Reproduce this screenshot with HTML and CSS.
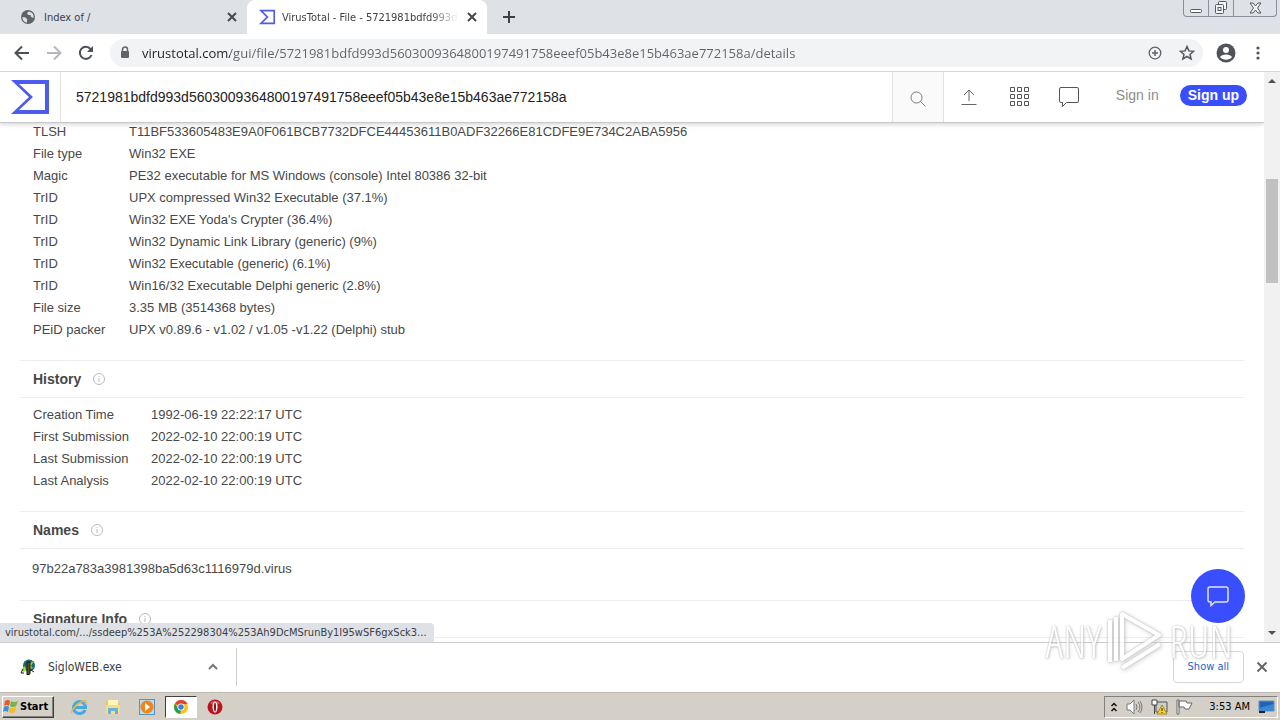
FILE: index.html
```html
<!DOCTYPE html>
<html lang="en">
<head>
<meta charset="utf-8">
<title>VirusTotal - File</title>
<link rel="stylesheet" href="styles.css">
</head>
<body>

<div class="tabstrip">
	<div class="tab">
		<svg class="favicon" width="16" height="16" viewBox="0 0 16 16"><circle cx="8" cy="8" r="7" fill="#5f6368"/><path d="M2.5 8l3 .6 1.8 2-.5 3.2C4 13.2 2.2 11 2.5 8zM8.500 2.500l-1.500 2 1.500 1.500h2l.5 2 2.500 1c.8-3.600-1.500-6-5-6.500z" fill="#dee1e6"/></svg>
		<span class="tab-title">Index of /</span>
		<button class="icon-btn tab-close" aria-label="Close tab"><svg width="10" height="10" viewBox="0 0 10 10"><path d="M1 1l8 8M9 1l-8 8" stroke="#45484d" stroke-width="2"/></svg></button>
	</div>
	<div class="tab active">
		<svg class="favicon" width="16" height="16" viewBox="0 0 40 36"><path d="M0 0h40v36H0l18-18zM10 4l14 14-14 14h26V4z" fill="#4b5cf0"/></svg>
		<span class="tab-title fade">VirusTotal - File - 5721981bdfd993d5</span>
		<button class="icon-btn tab-close" aria-label="Close tab"><svg width="10" height="10" viewBox="0 0 10 10"><path d="M1 1l8 8M9 1l-8 8" stroke="#45484d" stroke-width="2"/></svg></button>
	</div>
	<button class="icon-btn new-tab" aria-label="New tab"><svg width="12" height="12" viewBox="0 0 12 12"><path d="M6 0v12M0 6h12" stroke="#3c4043" stroke-width="2"/></svg></button>
	<div class="window-btns">
		<button aria-label="Minimize"><svg width="12" height="12" viewBox="0 0 12 12"><rect x=".5" y="7.500" width="11" height="3" rx="1" fill="#fff" stroke="#55585e"/></svg></button>
		<button aria-label="Restore"><svg width="14" height="14" viewBox="0 0 14 14" fill="#f4f5f7" stroke="#55585e"><rect x="4.500" y=".5" width="8" height="8" rx="1"/><rect x="1.500" y="3.500" width="8" height="9" rx="1"/><rect x="4" y="6.500" width="3" height="3"/></svg></button>
		<button class="close" aria-label="Close"><svg width="13" height="12" viewBox="0 0 13 12"><path d="M1 1h3l2.500 3L9 1h3L8.500 6l3.500 5H9L6.500 8 4 11H1l3.500-5z" fill="#f4f5f7" stroke="#55585e"/></svg></button>
	</div>
</div>

<div class="toolbar">
	<button class="icon-btn nav-btn" aria-label="Back"><svg width="16" height="16" viewBox="0 0 16 16"><path d="M15 8H2M8 1.500L1.500 8 8 14.500" fill="none" stroke="#4d5055" stroke-width="2"/></svg></button>
	<button class="icon-btn nav-btn" aria-label="Forward"><svg width="16" height="16" viewBox="0 0 16 16"><path d="M1 8h13M8 1.500L14.500 8 8 14.500" fill="none" stroke="#b5b7ba" stroke-width="2"/></svg></button>
	<button class="icon-btn nav-btn" aria-label="Reload"><svg width="16" height="16" viewBox="0 0 16 16"><path d="M13.500 10A6 6 0 1 1 12.500 4" fill="none" stroke="#4d5055" stroke-width="2"/><path d="M15 1v6H9z" fill="#4d5055"/></svg></button>
	<div class="omnibox">
		<svg width="10" height="13" viewBox="0 0 10 13"><rect x="1" y="5" width="8" height="7" rx="1" fill="#5f6368"/><path d="M2.500 6V3.500a2.500 2.500 0 0 1 5 0V6" fill="none" stroke="#5f6368" stroke-width="1.500"/></svg>
		<input class="url" type="text" aria-label="Address" value="virustotal.com/gui/file/5721981bdfd993d5603009364800197491758eeef05b43e8e15b463ae772158a/details">
		<button class="icon-btn nav-btn" aria-label="Zoom"><svg width="14" height="14" viewBox="0 0 14 14"><path d="M7 4v6M4 7h6" stroke="#5f6368" stroke-width="1.500"/><circle cx="7" cy="7" r="5.800" fill="none" stroke="#5f6368" stroke-width="1.300"/></svg></button>
		<button class="icon-btn nav-btn" aria-label="Bookmark"><svg width="16" height="16" viewBox="0 0 16 16"><path d="M8 1.500l1.900 4.400 4.700.4-3.600 3.100 1.100 4.600L8 11.500 3.900 14 5 9.400 1.400 6.300l4.700-.4z" fill="none" stroke="#55585e" stroke-width="1.500"/></svg></button>
	</div>
	<button class="icon-btn nav-btn profile" aria-label="Profile"><svg width="20" height="20" viewBox="0 0 20 20"><circle cx="10" cy="10" r="9.500" fill="#50545a"/><circle cx="10" cy="7" r="3" fill="#fff"/><path d="M4 14c1.500-3.500 10.500-3.500 12 0-2.500 3.500-9.500 3.500-12 0z" fill="#fff"/></svg></button>
	<button class="icon-btn nav-btn" aria-label="Menu"><svg width="4" height="14" viewBox="0 0 4 14" fill="#50545a"><circle cx="2" cy="2" r="1.600"/><circle cx="2" cy="7" r="1.600"/><circle cx="2" cy="12" r="1.600"/></svg></button>
</div>

<div class="viewport">
	<div class="page">
		<div class="vt-header">
			<a class="logo" href="#" aria-label="VirusTotal"><svg width="40" height="36" viewBox="0 0 40 36"><path d="M0 1h38v34H0l18-17zM8 5l14 13L8 31h26V5z" fill="#4b5cf0"/></svg></a>
			<input class="search" type="text" aria-label="Search" value="5721981bdfd993d5603009364800197491758eeef05b43e8e15b463ae772158a">
			<button class="icon-btn search-btn" aria-label="Search"><svg width="18" height="18" viewBox="0 0 18 18" fill="none" stroke="#777"><circle cx="7.500" cy="7.500" r="5.500"/><path d="M11.500 11.500l5 5"/></svg></button>
			<button class="icon-btn head-btn" aria-label="Upload"><svg width="18" height="18" viewBox="0 0 18 18" fill="none" stroke="#666"><path d="M1.500 16.500h15M9 13V2M4 7l5-5 5 5"/></svg></button>
			<button class="icon-btn head-btn" aria-label="Apps"><svg width="20" height="20" viewBox="0 0 20 20" fill="none" stroke="#555"><path d="M1.500.5h4v4h-4zM8.500.5h4v4h-4zM15.500.5h4v4h-4zM1.500 7.500h4v4h-4zM8.500 7.500h4v4h-4zM15.500 7.500h4v4h-4zM1.500 14.500h4v4h-4zM8.500 14.500h4v4h-4zM15.500 14.500h4v4h-4z"/></svg></button>
			<button class="icon-btn head-btn" aria-label="Comments"><svg width="20" height="20" viewBox="0 0 20 20" fill="none" stroke="#555"><path d="M2 .5h16a1.500 1.500 0 0 1 1.500 1.500v12a1.500 1.500 0 0 1-1.500 1.500H7.500l-4 4v-4H2A1.500 1.500 0 0 1 .5 14V2A1.500 1.500 0 0 1 2 .5z"/></svg></button>
			<a class="signin" href="#">Sign in</a>
			<a class="signup" href="#">Sign up</a>
		</div>

		<div class="details">
			<table class="props basic">
				<tr><th>TLSH</th><td>T11BF533605483E9A0F061BCB7732DFCE44453611B0ADF32266E81CDFE9E734C2ABA5956</td></tr>
				<tr><th>File type</th><td>Win32 EXE</td></tr>
				<tr><th>Magic</th><td>PE32 executable for MS Windows (console) Intel 80386 32-bit</td></tr>
				<tr><th>TrID</th><td>UPX compressed Win32 Executable (37.1%)</td></tr>
				<tr><th>TrID</th><td>Win32 EXE Yoda's Crypter (36.4%)</td></tr>
				<tr><th>TrID</th><td>Win32 Dynamic Link Library (generic) (9%)</td></tr>
				<tr><th>TrID</th><td>Win32 Executable (generic) (6.1%)</td></tr>
				<tr><th>TrID</th><td>Win16/32 Executable Delphi generic (2.8%)</td></tr>
				<tr><th>File size</th><td>3.35 MB (3514368 bytes)</td></tr>
				<tr><th>PEiD packer</th><td>UPX v0.89.6 - v1.02 / v1.05 -v1.22 (Delphi) stub</td></tr>
			</table>

			<h3>History <svg class="info" width="12" height="12" viewBox="0 0 12 12"><circle cx="6" cy="6" r="5.500"/><path d="M6 5v4M6 3v1"/></svg></h3>
			<table class="props history">
				<tr><th>Creation Time</th><td>1992-06-19 22:22:17 UTC</td></tr>
				<tr><th>First Submission</th><td>2022-02-10 22:00:19 UTC</td></tr>
				<tr><th>Last Submission</th><td>2022-02-10 22:00:19 UTC</td></tr>
				<tr><th>Last Analysis</th><td>2022-02-10 22:00:19 UTC</td></tr>
			</table>

			<h3>Names <svg class="info" width="12" height="12" viewBox="0 0 12 12"><circle cx="6" cy="6" r="5.500"/><path d="M6 5v4M6 3v1"/></svg></h3>
			<div class="names">97b22a783a3981398ba5d63c1116979d.virus</div>

			<h3>Signature Info <svg class="info" width="12" height="12" viewBox="0 0 12 12"><circle cx="6" cy="6" r="5.500"/><path d="M6 5v4M6 3v1"/></svg></h3>
		</div>
	</div>
	<div class="scrollbar">
		<svg width="16" height="18" viewBox="0 0 16 18"><path d="M4 11l4-4 4 4z" fill="#505050"/></svg>
		<div class="thumb"></div>
		<svg class="down" width="16" height="18" viewBox="0 0 16 18"><path d="M4 7l4 4 4-4z" fill="#505050"/></svg>
	</div>
	<button class="chat" aria-label="Chat"><svg width="22" height="22" viewBox="0 0 22 22" fill="none" stroke="#dfe3ff" stroke-width="1.500"><path d="M3 2h16a2 2 0 0 1 2 2v11a2 2 0 0 1-2 2H8l-4 3.500V17H3a2 2 0 0 1-2-2V4a2 2 0 0 1 2-2z"/></svg></button>
	<div class="status">virustotal.com/.../ssdeep%253A%252298304%253Ah9DcMSrunBy1I95wSF6gxSck3...</div>
</div>

<div class="shelf">
	<svg width="16" height="16" viewBox="0 0 16 16"><circle cx="9" cy="6.500" r="6" fill="#1c6670"/><path d="M1 11l4-4 1 3 4-6 4-2-3 5 2 2-3 1-2-2-4 5z" fill="#8fdc3c"/><path d="M7 3h3v12l-3 1z" fill="#6b4a26" stroke="#151a12"/><path d="M3 10l-2 4h3M11 11l3 2" stroke="#151a12" fill="none"/></svg>
	<span class="filename">SigloWEB.exe</span>
	<button class="icon-btn chevron" aria-label="File options"><svg width="10" height="7" viewBox="0 0 10 7"><path d="M1 6l4-4 4 4" fill="none" stroke="#777" stroke-width="2"/></svg></button>
	<span class="divider"></span>
	<button class="show-all">Show all</button>
	<button class="icon-btn" aria-label="Close downloads"><svg width="12" height="12" viewBox="0 0 12 12"><path d="M1.500 1.500l9 9M10.500 1.500l-9 9" stroke="#666" stroke-width="2"/></svg></button>
</div>

<div class="taskbar">
	<button class="start"><svg width="16" height="15" viewBox="0 0 16 15"><path d="M2 2q3-2 5 0L6 7Q4 5 1 7z" fill="#e8582a"/><path d="M8 2q3 2 7 0l-2 5q-3 2-6 0z" fill="#74b544"/><path d="M1 8q3-2 5 0l-1 5q-3-2-5 0z" fill="#3c8fd9"/><path d="M7 8q3 2 6 0l-1 5q-3 2-6 0z" fill="#f5bb27"/></svg>Start</button>
	<button class="task" aria-label="Internet Explorer"><svg width="18" height="18" viewBox="0 0 18 18" fill="none"><path d="M15 12a6 6 0 1 1 .5-2.500H4" stroke="#48a8df" stroke-width="3"/><path d="M2 15C0 12 12 1 16 3c1 1-1 3-1 3" stroke="#e9b743" stroke-width="1.500"/></svg></button>
	<button class="task" aria-label="Explorer"><svg width="18" height="18" viewBox="0 0 18 18"><path d="M2 3h5l1 2h8v11H2z" fill="#e9c95d"/><path d="M4 2h10v6H4z" fill="#fff4bd"/><path d="M2 7h14v9H2z" fill="#f4df83"/><path d="M4 10h10v6h-3v-3H7v3H4z" fill="#69b2dc"/></svg></button>
	<button class="task" aria-label="Media Player"><svg width="18" height="18" viewBox="0 0 18 18"><rect x="1.500" y="1.500" width="15" height="15" fill="#b9dcf3" stroke="#5593c4"/><circle cx="9" cy="9" r="6.500" fill="#ef851a"/><path d="M7 5l5 4-5 4z" fill="#fff"/></svg></button>
	<button class="task pressed" aria-label="Chrome"><svg width="16" height="16" viewBox="0 0 16 16"><circle cx="8" cy="8" r="7" fill="#fbc116"/><path d="M8 8L2 4.500A7 7 0 0 1 14.500 5H8z" fill="#df4234"/><path d="M2 4.500L5.500 10 8 11l-1 4A7 7 0 0 1 2 4.500z" fill="#269c50"/><circle cx="8" cy="8" r="3.500" fill="#fff"/><circle cx="8" cy="8" r="2.700" fill="#397ee8"/></svg></button>
	<button class="task" aria-label="Opera"><svg width="16" height="16" viewBox="0 0 16 16"><circle cx="8" cy="8" r="7.500" fill="#bd1520"/><path d="M3 4a7 7 0 0 1 10 0L8 7z" fill="#df5a5c"/><ellipse cx="8" cy="8" rx="2.500" ry="5.500" fill="#fff"/><ellipse cx="8" cy="8" rx="1" ry="4.500" fill="#8a1018"/></svg></button>
	<div class="tray">
		<svg width="8" height="12" viewBox="0 0 8 12" fill="none" stroke="#111" stroke-width="1.500"><path d="M1.500 5L4 2.500 6.500 5M1.500 10L4 7.500 6.500 10"/></svg>
		<svg width="17" height="16" viewBox="0 0 17 16"><path d="M1 5h3l4-4v14l-4-4H1z" fill="#fff" stroke="#777"/><path d="M10 5q2 3 0 6M12 3q4 5 0 10M14 2q4 6 0 12" fill="none" stroke="#777"/></svg>
		<svg width="17" height="16" viewBox="0 0 17 16"><path d="M5 3h11v10H5z" fill="#ccd0cd" stroke="#555"/><path d="M1 1h5v5H1zM3.500 6v9" fill="#fff" stroke="#444"/><path d="M11 6l5 9H6z" fill="#fbd620" stroke="#a88a16"/><path d="M11 9v3M11 13v1" stroke="#222"/></svg>
		<svg width="17" height="16" viewBox="0 0 17 16"><path d="M1 1h2v14H1zM3 2h7l1 2h5l-3 6H9L8 8H3z" fill="#fff" stroke="#666"/></svg>
		<span class="clock">3:53 AM</span>
		<svg width="17" height="13" viewBox="0 0 17 13"><path d="M1 1h15v10H1z" fill="#2463b3" stroke="#6691b9"/><path d="M1 8l15-4v7H1z" fill="#3b87d3"/><path d="M1 12h6" stroke="#222" stroke-width="2"/></svg>
	</div>
</div>

<div class="watermark">
	<span>ANY</span>
	<svg class="play" width="58" height="64" viewBox="0 0 58 64" fill="none" stroke="#fff" stroke-width="4" stroke-linejoin="round"><path d="M16 5l37 21-37 24zM4 11v42M10 8v44M16 59l38-24"/></svg>
	<span>RUN</span>
</div>

</body>
</html>
```
FILE: styles.css
```css
* {
	box-sizing: border-box;
}

body {
	margin: 0;
	height: 100vh;
	display: flex;
	flex-direction: column;
	overflow: hidden;
	position: relative;
	background: #fff;
	font-family: "DejaVu Sans Condensed", "DejaVu Sans", sans-serif;
	font-size: 11px;
	color: #3c4043;
}

button {
	font-family: inherit;
	padding: 0;
}

input {
	border: 0;
	outline: 0;
	padding: 0;
	min-width: 0;
	background: none;
}

svg {
	flex: none;
}

.icon-btn {
	border: 0;
	background: none;
	display: flex;
	align-items: center;
	justify-content: center;
}

/* browser tabs */
.tabstrip {
	display: flex;
	height: 34px;
	flex: none;
	background: #dee1e6;
}

.tab {
	display: flex;
	align-items: center;
	width: 247px;
	padding: 0 9px 0 20px;
}

.tab.active {
	width: 240px;
	padding-left: 12px;
	background: #fff;
	border-radius: 8px 8px 0 0;
}

.tab-title {
	flex: 1;
	margin: 0 7px 0 8px;
	overflow: hidden;
	white-space: nowrap;
}

.tab-title.fade {
	margin-left: 7px;
	margin-right: 0;
	mask-image: linear-gradient(90deg, #000 80%, transparent 96%);
}

.tab-close {
	width: 12px;
	height: 16px;
}

.new-tab {
	width: 44px;
}

.window-btns {
	display: flex;
	height: 17px;
	margin-left: auto;
	margin-right: 3px;
	border: 1px solid #8b8e95;
	border-top: 0;
	border-radius: 0 0 4px 4px;
}

.window-btns button {
	display: flex;
	align-items: center;
	justify-content: center;
	width: 25px;
	border: 0;
	border-right: 1px solid #8b8e95;
	background: none;
}

.window-btns .close {
	width: 42px;
	border-right: 0;
}

/* address bar */
.toolbar {
	display: flex;
	align-items: center;
	height: 38px;
	flex: none;
	padding: 0 6px;
	border-bottom: 1px solid #d5d6d8;
}

.nav-btn {
	width: 32px;
	height: 28px;
}

.omnibox {
	display: flex;
	align-items: center;
	flex: 1;
	height: 28px;
	margin-left: 8px;
	padding-left: 10px;
	border-radius: 14px;
	background: #f1f3f4;
}

.url {
	flex: 1;
	margin-left: 12px;
	font-family: "Open Sans", "Noto Sans", sans-serif;
	font-size: 13px;
	color: #5f6368;
	/* host part is darker than the path */
	background: linear-gradient(90deg, #202124 88px, #5f6368 88px);
	-webkit-background-clip: text;
	-webkit-text-fill-color: transparent;
}

.profile {
	margin-left: 7px;
}

/* page */
.viewport {
	display: flex;
	flex: 1;
	min-height: 0;
	position: relative;
}

.page {
	flex: 1;
	overflow: hidden;
	font-family: "Liberation Sans", Arial, sans-serif;
	font-size: 13px;
	color: #484848;
}

.vt-header {
	display: flex;
	align-items: center;
	height: 51px;
	position: relative;
	background: #fff;
	border-bottom: 1px solid #c8c8c8;
	box-shadow: 0 1px 5px rgba(0, 0, 0, .2);
}

.logo {
	display: flex;
	align-items: center;
	width: 61px;
	height: 50px;
	padding-left: 11px;
	border-right: 1px solid #e3e3dc;
}

.search {
	flex: 1;
	padding-left: 15px;
	font-family: "Liberation Sans", Arial, sans-serif;
	font-size: 14px;
	color: #222;
}

.search-btn {
	width: 52px;
	height: 50px;
	padding-top: 3px;
	border: 1px solid #e2e2e2;
	border-width: 0 1px;
	background: #fafafa;
}

.head-btn {
	width: 50px;
	height: 50px;
}

.signin {
	margin: 0 21px 4px 22px;
	font-size: 14px;
	color: #8c8c8c;
	text-decoration: none;
}

.signup {
	margin: 0 17px 4px 0;
	padding: 0 8px;
	border-radius: 11px;
	background: #394eff;
	font-size: 14px;
	line-height: 21px;
	font-weight: bold;
	color: #fff;
	text-decoration: none;
}

.details {
	margin: -2px 20px 0;
}

.props {
	border-collapse: collapse;
	margin: 6px 0 19px 13px;
}

.props.basic {
	margin-top: 0;
}

.props th {
	width: 96px;
	padding: 0;
	font-weight: normal;
	line-height: 22px;
	text-align: left;
}

.props.history th {
	width: 118px;
}

.props td {
	padding: 0;
	line-height: 22px;
}

.details h3 {
	display: flex;
	align-items: center;
	gap: 12px;
	height: 38px;
	margin: 0;
	padding-left: 13px;
	border: 1px solid #ededed;
	border-width: 1px 0;
	font-size: 14px;
}

.info {
	fill: none;
	stroke: #bbb;
}

.names {
	padding: 9px 12px 20px;
	line-height: 22px;
}

.scrollbar {
	display: flex;
	flex-direction: column;
	width: 16px;
	background: #f1f1f1;
}

.thumb {
	height: 104px;
	margin: 89px 2px 0;
	background: #c1c1c1;
}

.scrollbar .down {
	margin-top: auto;
}

.chat {
	position: absolute;
	right: 35px;
	bottom: 19px;
	display: flex;
	align-items: center;
	justify-content: center;
	width: 54px;
	height: 54px;
	border: 0;
	border-radius: 50%;
	background: #394eff;
}

.status {
	position: absolute;
	left: 0;
	bottom: 0;
	padding: 0 7px 0 5px;
	border-radius: 0 4px 0 0;
	background: #dee1e6;
	line-height: 19px;
}

/* downloads */
.shelf {
	display: flex;
	align-items: center;
	height: 50px;
	flex: none;
	padding: 0 12px 2px 20px;
	border-top: 1px solid #ccc;
}

.filename {
	width: 153px;
	margin-left: 12px;
	font-size: 12px;
}

.chevron {
	width: 24px;
	height: 24px;
}

.divider {
	width: 1px;
	height: 38px;
	margin-left: 11px;
	background: #ccc;
}

.show-all {
	height: 32px;
	margin-left: auto;
	margin-right: 12px;
	padding: 0 14px;
	border: 1px solid #d5d7da;
	border-radius: 4px;
	background: #fff;
	font-size: 11px;
	color: #1a66c8;
}

/* windows taskbar */
.taskbar {
	display: flex;
	align-items: center;
	height: 28px;
	flex: none;
	padding: 0 2px;
	border-top: 1px solid #bbb7b0;
	background: #d4d0c8;
}

.start {
	display: flex;
	align-items: center;
	gap: 1px;
	width: 52px;
	height: 22px;
	margin-right: 9px;
	border: 1px solid;
	border-color: #fff #404040 #404040 #fff;
	box-shadow: inset -1px -1px #808080;
	background: #d4d0c8;
	font-size: 11px;
	font-weight: bold;
	color: #000;
}

.task {
	display: flex;
	align-items: center;
	justify-content: center;
	width: 32px;
	height: 22px;
	margin-right: 2px;
	border: 0;
	background: none;
}

.task.pressed {
	border: 1px solid;
	border-color: #404040 #fff #fff #404040;
	background: #fff;
}

.tray {
	display: flex;
	align-items: center;
	gap: 8px;
	height: 22px;
	margin-left: auto;
	padding: 0 2px 0 5px;
	border: 1px solid;
	border-color: #808080 #fff #fff #808080;
	color: #000;
}

.clock {
	margin-left: 8px;
}

/* recorder mark over the desktop */
.watermark {
	position: absolute;
	right: 47px;
	bottom: 45px;
	display: flex;
	align-items: center;
	gap: 5px;
	font-family: "Open Sans Condensed Light", "Open Sans Condensed", "Roboto Condensed", "Liberation Sans Narrow", sans-serif;
	font-size: 44px;
	font-weight: 300;
	line-height: 68px;
	color: #fff;
	text-shadow: 0 0 2px #aaa, 1px 1px 3px #bbb;
	opacity: .8;
	pointer-events: none;
}

.play {
	filter: drop-shadow(0 0 1px #aaa) drop-shadow(1px 1px 2px #ccc);
}
```
